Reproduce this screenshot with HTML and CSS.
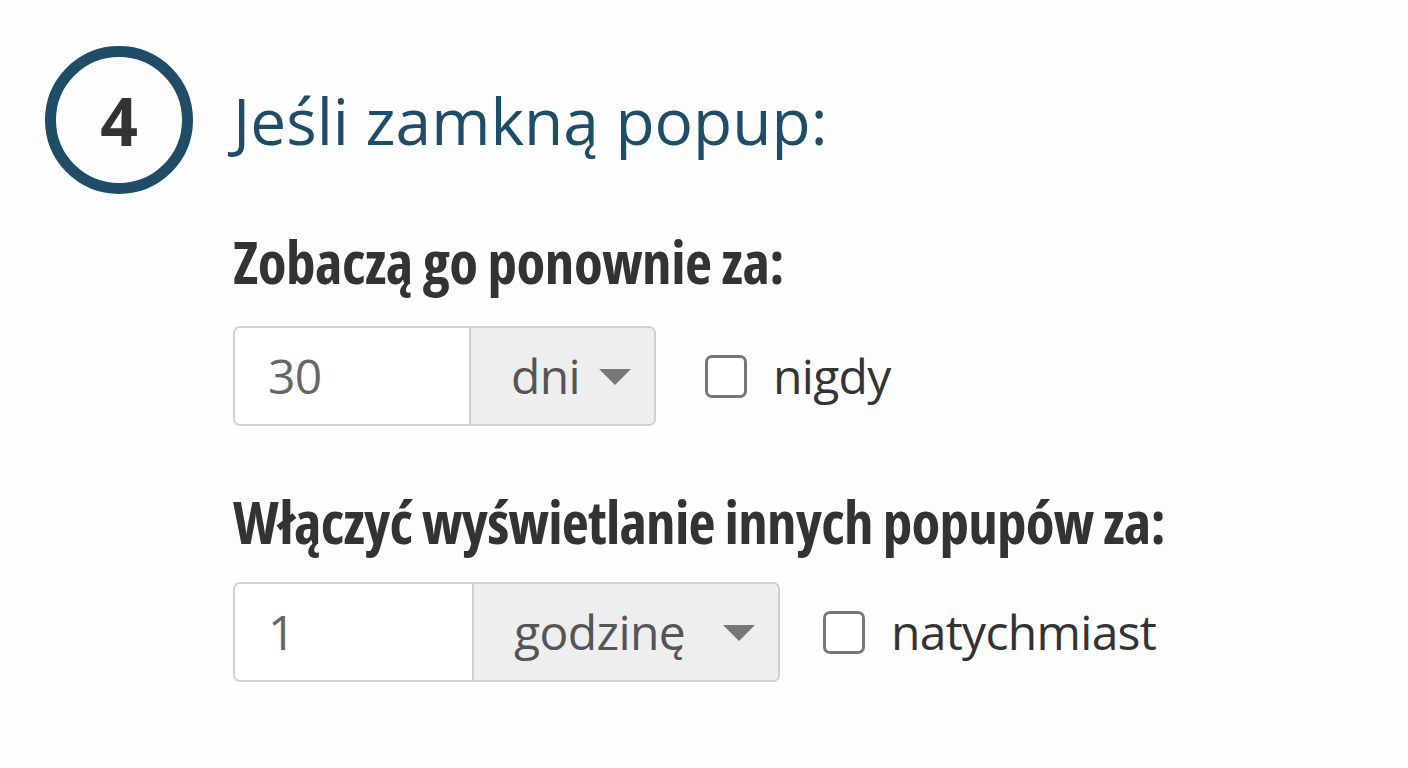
FILE: index.html
```html
<!DOCTYPE html>
<html lang="pl">
<head>
<meta charset="utf-8">
<title>Jeśli zamkną popup</title>
<link rel="stylesheet" href="styles.css">
</head>
<body>
<main class="step">
  <div class="step-badge">4</div>
  <section class="step-body">
    <h2 class="step-title">Jeśli zamkną popup:</h2>

    <h3 class="field-label label-first">Zobaczą go ponownie za:</h3>
    <div class="field-row">
      <div class="input-group group-days">
        <div class="num-input num-days">30</div>
        <div class="unit-select">
          <span class="unit-text">dni</span>
          <span class="caret"></span>
        </div>
      </div>
      <label class="check">
        <span class="check-box"></span>
        <span class="check-text">nigdy</span>
      </label>
    </div>

    <h3 class="field-label label-second">Włączyć wyświetlanie innych popupów za:</h3>
    <div class="field-row">
      <div class="input-group group-hours">
        <div class="num-input num-hours">1</div>
        <div class="unit-select">
          <span class="unit-text">godzinę</span>
          <span class="caret"></span>
        </div>
      </div>
      <label class="check check-wide">
        <span class="check-box"></span>
        <span class="check-text">natychmiast</span>
      </label>
    </div>
  </section>
</main>
</body>
</html>
```
FILE: styles.css
```css
* { box-sizing: border-box; }

html, body {
  margin: 0;
  background: #fdfdfd;
}

body {
  font-family: "Open Sans", "Noto Sans", sans-serif;
  color: #333;
}

.step {
  display: flex;
  align-items: flex-start;
  gap: 40px;
  padding: 46px 0 0 45px;
}

.step-badge {
  flex: 0 0 148px;
  width: 148px;
  height: 148px;
  border: 11px solid #1f4d68;
  border-radius: 50%;
  display: flex;
  align-items: center;
  justify-content: center;
  font-size: 66px;
  line-height: 1;
  font-weight: 700;
  color: #333;
}

.step-body {
  display: flex;
  flex-direction: column;
  align-items: flex-start;
}

.step-title {
  margin: 43px 0 0;
  font-size: 64px;
  line-height: 64px;
  font-weight: 400;
  color: #1f4d68;
  white-space: nowrap;
}

.field-label {
  margin: 0;
  font-size: 59px;
  line-height: 59px;
  font-weight: 700;
  font-stretch: 75%;
  letter-spacing: -0.5px;
  color: #333;
  white-space: nowrap;
}

.label-first { margin-top: 79px; }
.label-second { margin-top: 66px; letter-spacing: -0.75px; }

.field-row {
  display: flex;
  align-items: center;
  margin-top: 35px;
}

.label-second + .field-row { margin-top: 31px; }

.input-group {
  display: flex;
  height: 100px;
  border: 2px solid #cfcfcf;
  border-radius: 7px;
  overflow: hidden;
  background: #fff;
  font-size: 48px;
  line-height: 48px;
  letter-spacing: -0.6px;
}

.group-days { width: 423px; }
.group-hours { width: 547px; }

.num-input {
  display: flex;
  align-items: center;
  padding-left: 33px;
  color: #666;
  background: #fff;
}

.num-days { width: 234px; }
.num-hours { width: 237px; }

.unit-select {
  flex: 1;
  display: flex;
  align-items: center;
  justify-content: space-between;
  padding: 0 23px 0 40px;
  border-left: 2px solid #cfcfcf;
  background: #eeeeee;
  color: #555;
}

.caret {
  width: 0;
  height: 0;
  border-left: 16px solid transparent;
  border-right: 16px solid transparent;
  border-top: 16px solid #777;
  margin-top: 2px;
}

.check {
  display: flex;
  align-items: center;
  gap: 26px;
  margin-left: 49px;
  font-size: 48px;
  line-height: 48px;
  letter-spacing: -0.7px;
  color: #333;
}

.check-wide { margin-left: 43px; }

.check-box {
  width: 42px;
  height: 43px;
  border: 3px solid #777;
  border-radius: 7px;
  background: #fff;
}
```
